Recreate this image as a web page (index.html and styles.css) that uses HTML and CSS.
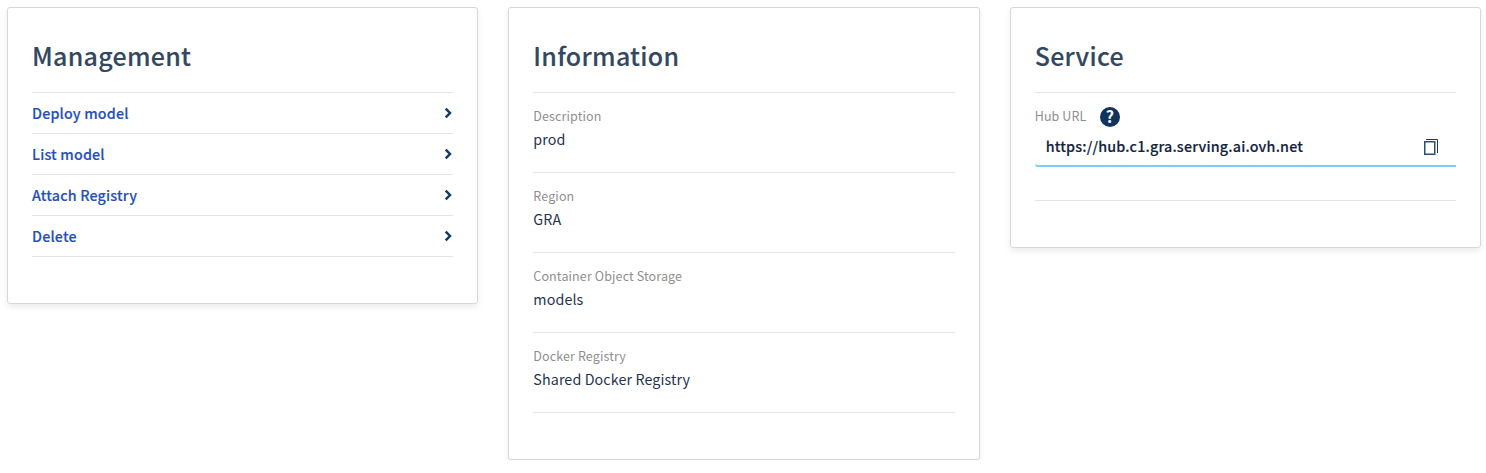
FILE: index.html
```
<!DOCTYPE html>
<html lang="en">
<head>
<meta charset="utf-8">
<title>Serving engine</title>
<link rel="stylesheet" href="styles.css">
</head>
<body>
<main class="dashboard">
  <section class="tile">
    <h2 class="tile-title">Management</h2>
    <ul class="actions">
      <li class="action"><a class="action-link" href="#"><span>Deploy model</span><svg class="chevron" viewBox="0 0 8 12"><path d="M1.7 1.6 6 6 1.7 10.4"/></svg></a></li>
      <li class="action"><a class="action-link" href="#"><span>List model</span><svg class="chevron" viewBox="0 0 8 12"><path d="M1.7 1.6 6 6 1.7 10.4"/></svg></a></li>
      <li class="action"><a class="action-link" href="#"><span>Attach Registry</span><svg class="chevron" viewBox="0 0 8 12"><path d="M1.7 1.6 6 6 1.7 10.4"/></svg></a></li>
      <li class="action"><a class="action-link" href="#"><span>Delete</span><svg class="chevron" viewBox="0 0 8 12"><path d="M1.7 1.6 6 6 1.7 10.4"/></svg></a></li>
    </ul>
  </section>
  <section class="tile">
    <h2 class="tile-title">Information</h2>
    <dl class="details">
      <div class="detail"><dt class="term">Description</dt><dd class="value">prod</dd></div>
      <div class="detail"><dt class="term">Region</dt><dd class="value">GRA</dd></div>
      <div class="detail"><dt class="term">Container Object Storage</dt><dd class="value">models</dd></div>
      <div class="detail"><dt class="term">Docker Registry</dt><dd class="value">Shared Docker Registry</dd></div>
    </dl>
  </section>
  <section class="tile">
    <h2 class="tile-title">Service</h2>
    <div class="service">
      <div class="service-label"><span class="term">Hub URL</span><span class="help">?</span></div>
      <div class="clipboard">
        <span class="url">https://hub.c1.gra.serving.ai.ovh.net</span>
        <svg class="copy" viewBox="0 0 16 18"><path class="copy-back" d="M3 1.5H14.5V15"/><path class="copy-front" d="M1.75 3.75h10v12.5h-10z"/></svg>
      </div>
    </div>
  </section>
</main>
</body>
</html>
```
FILE: styles.css
```
* { box-sizing: border-box; }
body {
  margin: 0;
  background: #fff;
  color: #1f3350;
  font-family: "Noto Sans CJK JP", "Noto Sans CJK SC", sans-serif;
  font-size: 14.3px;
}
.dashboard {
  display: grid;
  grid-template-columns: repeat(3, 1fr);
  gap: 30px;
  align-items: start;
  padding: 7px 5px 0 7px;
}
.tile {
  padding: 24px 24px 46px;
  border: 1px solid #d5d8dd;
  border-radius: 3px;
  box-shadow: 0 3px 6px rgba(0, 0, 0, 0.08);
}
.tile-title {
  height: 60px;
  margin: 0;
  line-height: 46px;
  font-size: 25px;
  font-weight: 500;
  letter-spacing: 0.28px;
  -webkit-text-stroke: 0.12px;
  color: #33475f;
}
.actions, .details { margin: 0; padding: 0; list-style: none; border-top: 1px solid #e4e4e6; }
.action { border-bottom: 1px solid #e4e4e6; }
.action-link {
  display: flex;
  align-items: center;
  justify-content: space-between;
  height: 40px;
  font-weight: 500;
  letter-spacing: 0.16px;
  -webkit-text-stroke: 0.15px;
  color: #2450b8;
  text-decoration: none;
}
.action-link span { padding-bottom: 2px; }
.chevron { width: 8px; height: 12px; fill: none; stroke: #153a6b; stroke-width: 2.5; margin-right: 1px; }
.detail { height: 80px; padding-top: 11px; border-bottom: 1px solid #e4e4e6; }
.term { font-size: 12.5px; line-height: 24px; letter-spacing: 0.12px; color: #8f8f8f; }
.value { margin: 0; line-height: 22px; letter-spacing: 0.1px; }
.service { height: 109px; border-top: 1px solid #e4e4e6; border-bottom: 1px solid #e4e4e6; padding-top: 12px; }
.service-label { display: flex; align-items: center; gap: 13.4px; height: 24px; }
.service-label .term { padding-bottom: 2px; }
.help {
  width: 20px; height: 20px; border-radius: 50%;
  background: #11345f; color: #fff;
  font-size: 16px; font-weight: 700; line-height: 19px; text-align: center;
}
.clipboard {
  display: flex; align-items: center; justify-content: space-between;
  height: 38px; padding: 0 17px 0 11px;
  border-bottom: 2px solid #7bcff5; border-radius: 3px 0 0 3px;
}
.url { padding-bottom: 3px; font-weight: 500; letter-spacing: 0.18px; -webkit-text-stroke: 0.15px; color: #12233f; }
.copy { width: 16px; height: 18px; fill: none; stroke: #17386a; }
.copy-front { stroke: #2c4c78; stroke-width: 1.5; }
.copy-back { stroke-width: 1; }
```
